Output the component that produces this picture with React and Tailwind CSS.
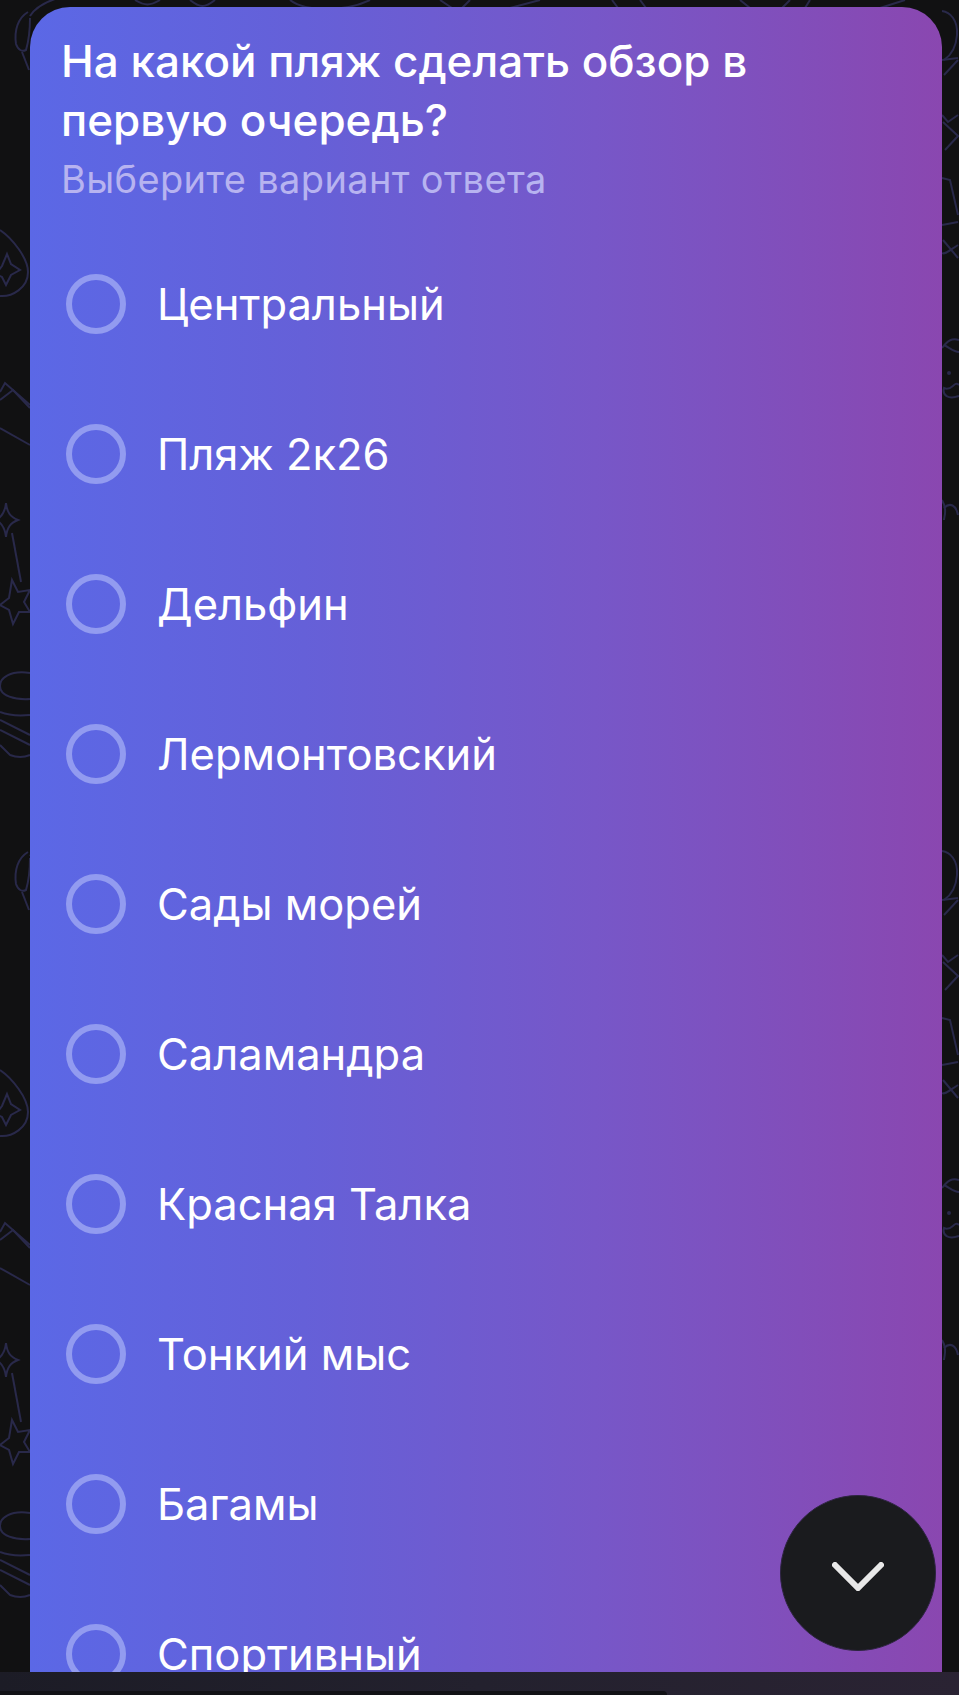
const options = [
  "Центральный",
  "Пляж 2к26",
  "Дельфин",
  "Лермонтовский",
  "Сады морей",
  "Саламандра",
  "Красная Талка",
  "Тонкий мыс",
  "Багамы",
  "Спортивный",
];

function Doodles() {
  return (
    <>
      {/* left edge */}
      <path d="M28 12 C18 18 14 30 16 44 C18 50 22 52 26 50 C29 40 30 28 30 18" />
      <path d="M22 52 L29 70" />
      <path d="M30 16 C35 8 45 2 58 -2" />
      <path d="M0 230 C12 238 28 258 28 272 C28 288 12 297 0 296" />
      <path d="M7 254 L11 264 L20 270 L11 275 L6 285 L2 277 L-4 274 L2 266 Z" />
      <path d="M0 392 L5 383 L30 405" />
      <path d="M0 400 L13 390 L30 408" />
      <path d="M0 428 L30 445" />
      <path d="M6 503 C7 512 10 517 18 520 C10 523 7 528 6 537 C5 528 2 523 -4 520 C2 517 5 512 6 503 Z" />
      <path d="M12 533 L21 582" />
      <path d="M12 580 L18 592 L30 590 L24 602 L30 612 L19 612 L13 624 L9 610 L0 605 L9 598 Z" />
      <path d="M30 673 C10 670 0 678 0 686 C0 696 15 700 30 699" />
      <path d="M0 712 C10 716 20 716 30 715" />
      <path d="M0 720 L30 735" />
      <path d="M0 730 L30 745" />
      <path d="M0 745 L10 755 C18 758 25 757 30 755" />
      {/* right edge */}
      <path d="M942 11 C950 12 958 20 957 35 C956 48 950 56 944 60" />
      <path d="M942 60 L958 58" />
      <path d="M944 75 L958 60" />
      <path d="M942 115 L948 122 L958 115" />
      <path d="M943 122 L958 136 L945 150" />
      <path d="M942 178 L950 180 L958 215" />
      <path d="M942 225 L958 222" />
      <path d="M943 240 L958 258" />
      <path d="M958 245 C950 250 945 255 942 253" />
      <path d="M942 348 C948 340 952 338 959 340" />
      <path d="M944 345 C950 348 954 352 959 352" />
      <circle cx="949" cy="373" r="2" fill="#29294a" stroke="none" />
      <path d="M959 385 C954 380 952 392 944 388 C942 395 948 400 959 396" />
      <path d="M942 500 C948 510 944 516 944 520" />
      <path d="M944 508 C950 502 956 505 958 515" />
    </>
  );
}

function PollOption({ label }) {
  return (
    <div className="flex h-[150px] shrink-0 items-center">
      <div className="ml-[5px] h-[60px] w-[60px] shrink-0 rounded-full border-[6px] border-[#929bf0]" />
      <span className="ml-[31px] text-[43.5px] leading-[60px] text-white">{label}</span>
    </div>
  );
}

export default function App() {
  return (
    <div className="relative flex h-[1695px] w-[959px] flex-col overflow-hidden bg-[#111112] font-['Inter',sans-serif]">
      <svg className="absolute left-0 top-0" width="959" height="1695" fill="none" stroke="#29294a" strokeWidth="2">
        <Doodles />
        <g transform="translate(0 840)">
          <Doodles />
        </g>
        {/* top edge */}
        <path d="M135 0 C145 6 150 6 160 0 M190 0 C200 8 205 8 215 0 M290 0 C305 12 345 12 370 0 M440 0 L452 8 M470 0 L462 8 M510 8 L540 0 M612 0 L618 8 M640 0 L646 8 M740 0 L750 8 M790 0 L782 8 M810 0 L805 8 M880 8 L905 0" />
      </svg>
      <div className="relative flex min-h-0 flex-1 pt-[7px] pl-[30px] pr-[17px]">
        <div className="flex flex-1 flex-col overflow-hidden rounded-t-[40px] bg-[linear-gradient(90deg,#5b68e6_0%,#6560d8_30%,#7757c8_62%,#7d52c0_75%,#8a47b0_100%)] pl-[31px]">
          <h1 className="mt-[25px] text-[44px] font-medium leading-[59px] text-white">
            На какой пляж сделать обзор в
            <br />
            первую очередь?
          </h1>
          <p className="mt-[4px] text-[38px] leading-[50px] tracking-[0.35px] text-[#b7b3f0]">Выберите вариант ответа</p>
          <div className="mt-[25px] flex flex-col">
            {options.map((option) => (
              <PollOption key={option} label={option} />
            ))}
          </div>
        </div>
      </div>
      <div className="relative flex h-[23px] shrink-0 items-end bg-[linear-gradient(90deg,#1c1c26_0%,#23212e_50%,#2a2333_100%)]">
        <div className="h-[4px] w-[667px] rounded-tr-[4px] bg-[#121216]" />
      </div>
      <button className="absolute left-[780px] top-[1495px] flex h-[156px] w-[156px] items-center justify-center rounded-full border border-[#2d2440] bg-[#1a1b1e]">
        <svg className="mt-[6px]" width="52" height="29" viewBox="0 0 52 29" fill="none">
          <path d="M3 3 L26 26 L49 3" stroke="#e8e8e8" strokeWidth="6" strokeLinecap="round" strokeLinejoin="miter" />
        </svg>
      </button>
    </div>
  );
}
